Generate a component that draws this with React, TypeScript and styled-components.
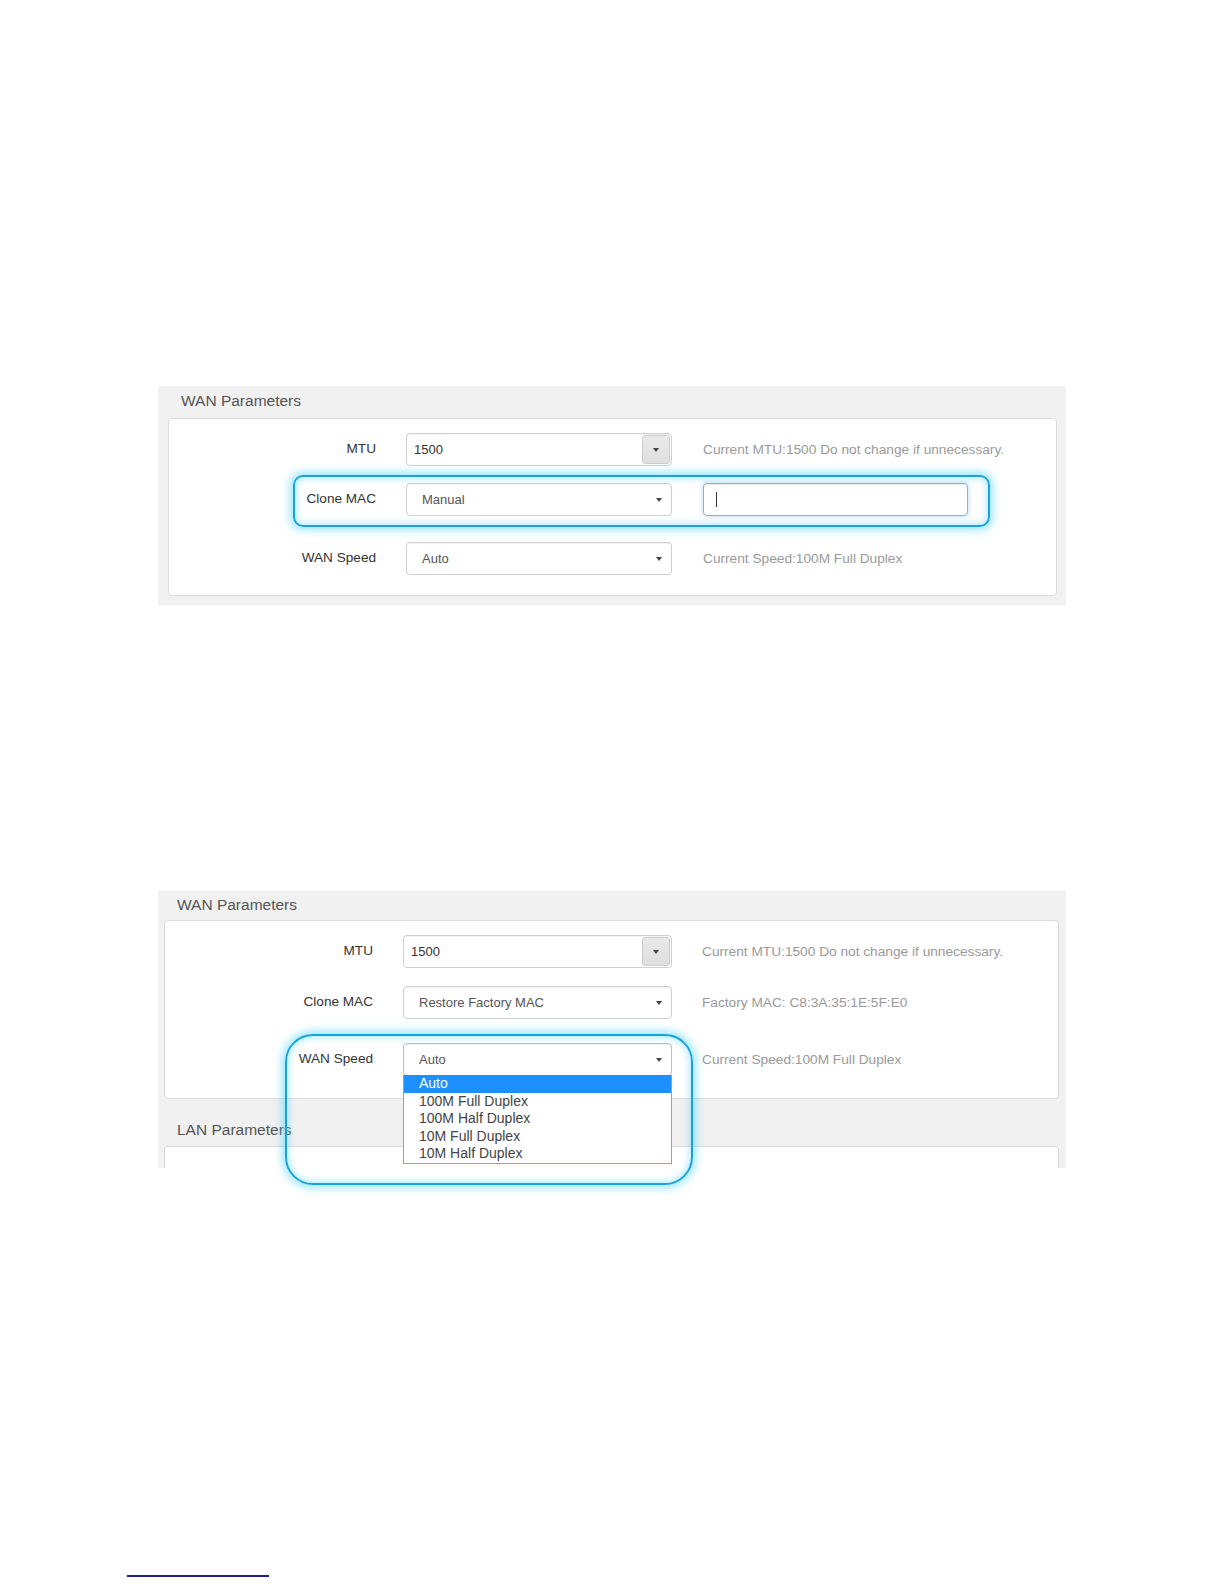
import React from "react";
import styled, { createGlobalStyle } from "styled-components";

const GlobalStyle = createGlobalStyle`
  html, body {
    margin: 0;
    padding: 0;
    background: #fff;
  }
  body {
    font-family: "Liberation Sans", Arial, sans-serif;
  }
`;

const Page = styled.div`
  width: 1224px;
  height: 1584px;
  display: flex;
  flex-direction: column;
  background: #fff;
  overflow: hidden;
`;

const Shot = styled.div<{ $top: number }>`
  margin: ${(p) => p.$top}px 0 0 158px;
  width: 908px;
  background: #f1f1f1;
  display: flex;
  flex-direction: column;
`;

const Title = styled.div<{ $h: number; $left: number }>`
  height: ${(p) => p.$h}px;
  line-height: ${(p) => p.$h - 2}px;
  padding-left: ${(p) => p.$left}px;
  font-size: 15.5px;
  color: #555;
  box-sizing: border-box;
`;

const SubTitle = styled(Title)`
  padding-top: 17px;
  line-height: 28px;
`;

const Card = styled.div<{ $h: number; $ml: number; $mr: number; $mb?: number }>`
  box-sizing: border-box;
  height: ${(p) => p.$h}px;
  margin: 0 ${(p) => p.$mr}px ${(p) => p.$mb ?? 0}px ${(p) => p.$ml}px;
  padding-top: 14px;
  background: #fff;
  border: 1px solid #dcdcdc;
  border-radius: 4px;
  display: flex;
  flex-direction: column;
`;

const StubCard = styled.div`
  box-sizing: border-box;
  height: 22px;
  margin: 0 7px 0 6px;
  background: #fff;
  border: 1px solid #dcdcdc;
  border-bottom: none;
  border-radius: 4px 4px 0 0;
`;

const Row = styled.div<{ $mt?: number }>`
  position: relative;
  display: flex;
  align-items: center;
  height: 33px;
  margin-top: ${(p) => p.$mt ?? 0}px;
`;

const Label = styled.div<{ $w: number }>`
  width: ${(p) => p.$w}px;
  padding-bottom: 3px;
  margin-right: 30px;
  text-align: right;
  font-size: 13.6px;
  color: #333;
  white-space: nowrap;
`;

const Field = styled.div<{ $w: number }>`
  position: relative;
  box-sizing: border-box;
  width: ${(p) => p.$w}px;
  height: 33px;
  display: flex;
  align-items: center;
  background: #fff;
  border: 1px solid #cfcfcf;
  border-radius: 4px;
  box-shadow: inset 0 1px 1px rgba(0, 0, 0, 0.05);
  font-size: 13px;
`;

const SelectField = styled(Field)<{ $focus?: boolean }>`
  padding-left: 15px;
  color: #555;
  border-color: ${(p) => (p.$focus ? "#b4bfcf" : "#cfcfcf")};
`;

const ComboField = styled(Field)`
  padding-left: 7px;
  color: #333;
`;

const TextField = styled(Field)`
  padding-left: 12px;
  border-color: #7fb3e6;
  box-shadow: inset 0 1px 1px rgba(0, 0, 0, 0.075), 0 0 5px rgba(102, 175, 233, 0.5);
`;

const Cursor = styled.span`
  width: 1px;
  height: 15px;
  background: #333;
`;

const FieldText = styled.span`
  flex: 1;
`;

const Caret = styled.span<{ $size?: number }>`
  width: 0;
  height: 0;
  border-left: ${(p) => p.$size ?? 3}px solid transparent;
  border-right: ${(p) => p.$size ?? 3}px solid transparent;
  border-top: ${(p) => (p.$size ?? 3) + 1}px solid #444;
`;

const SelectCaret = styled(Caret)`
  margin-right: 9px;
`;

const ComboButton = styled.span`
  box-sizing: border-box;
  width: 28px;
  height: 29px;
  margin-right: 1px;
  display: flex;
  align-items: center;
  justify-content: center;
  background: linear-gradient(#e9e9e9, #dfdfdf);
  border: 1px solid #cbcbcb;
  border-radius: 3px;
`;

const Help = styled.div<{ $ml: number }>`
  margin-left: ${(p) => p.$ml}px;
  font-size: 13.7px;
  color: #9a9a9a;
  white-space: nowrap;
`;

const OptionList = styled.div`
  position: absolute;
  top: 100%;
  left: -1px;
  right: -1px;
  z-index: 2;
  background: #fff;
  border: 1px solid #8aa3c8;
  border-top: none;
`;

const Option = styled.div<{ $active?: boolean }>`
  height: 17.5px;
  line-height: 17.5px;
  padding-left: 15px;
  font-size: 14px;
  color: ${(p) => (p.$active ? "#fff" : "#444")};
  background: ${(p) => (p.$active ? "#1e8fff" : "transparent")};
`;

const Callout = styled.div<{ $l: number; $t: number; $w: number; $h: number; $r: number }>`
  position: absolute;
  left: ${(p) => p.$l}px;
  top: ${(p) => p.$t}px;
  width: ${(p) => p.$w}px;
  height: ${(p) => p.$h}px;
  box-sizing: border-box;
  border: 2.5px solid #18a2dc;
  border-radius: ${(p) => p.$r}px;
  box-shadow: 0 0 8px 3px rgba(70, 210, 250, 0.55), inset 0 0 6px 2px rgba(70, 210, 250, 0.4);
  pointer-events: none;
  z-index: 3;
`;

const FootRule = styled.div`
  margin: 407px 0 0 127px;
  width: 142px;
  height: 1.5px;
  background: #1f2388;
`;

const speeds = ["Auto", "100M Full Duplex", "100M Half Duplex", "10M Full Duplex", "10M Half Duplex"];

function MtuRow({ labelW, fieldW, gap }: { labelW: number; fieldW: number; gap: number }) {
  return (
    <Row>
      <Label $w={labelW}>MTU</Label>
      <ComboField $w={fieldW}>
        <FieldText>1500</FieldText>
        <ComboButton>
          <Caret $size={3.5} />
        </ComboButton>
      </ComboField>
      <Help $ml={gap}>Current MTU:1500 Do not change if unnecessary.</Help>
    </Row>
  );
}

export default function App() {
  return (
    <>
      <GlobalStyle />
      <Page>
        <Shot $top={386}>
          <Title $h={32} $left={23}>
            WAN Parameters
          </Title>
          <Card $h={178} $ml={10} $mr={9} $mb={9}>
            <MtuRow labelW={207} fieldW={266} gap={31} />
            <Row $mt={17}>
              <Label $w={207}>Clone MAC</Label>
              <SelectField $w={266}>
                <FieldText>Manual</FieldText>
                <SelectCaret />
              </SelectField>
              <TextField $w={265} style={{ marginLeft: 31 }}>
                <Cursor />
              </TextField>
              <Callout $l={124} $t={-8} $w={697} $h={52} $r={10} />
            </Row>
            <Row $mt={26}>
              <Label $w={207}>WAN Speed</Label>
              <SelectField $w={266}>
                <FieldText>Auto</FieldText>
                <SelectCaret />
              </SelectField>
              <Help $ml={31}>Current Speed:100M Full Duplex</Help>
            </Row>
          </Card>
        </Shot>

        <Shot $top={286}>
          <Title $h={29} $left={19}>
            WAN Parameters
          </Title>
          <Card $h={179} $ml={6} $mr={7}>
            <MtuRow labelW={208} fieldW={269} gap={30} />
            <Row $mt={18}>
              <Label $w={208}>Clone MAC</Label>
              <SelectField $w={269}>
                <FieldText>Restore Factory MAC</FieldText>
                <SelectCaret />
              </SelectField>
              <Help $ml={30}>Factory MAC: C8:3A:35:1E:5F:E0</Help>
            </Row>
            <Row $mt={24}>
              <Label $w={208}>WAN Speed</Label>
              <SelectField $w={269} $focus>
                <FieldText>Auto</FieldText>
                <SelectCaret />
                <OptionList>
                  {speeds.map((s, i) => (
                    <Option key={s} $active={i === 0}>
                      {s}
                    </Option>
                  ))}
                </OptionList>
              </SelectField>
              <Help $ml={30}>Current Speed:100M Full Duplex</Help>
              <Callout $l={120} $t={-9} $w={408} $h={151} $r={28} />
            </Row>
          </Card>
          <SubTitle $h={47} $left={19}>
            LAN Parameters
          </SubTitle>
          <StubCard />
        </Shot>

        <FootRule />
      </Page>
    </>
  );
}
